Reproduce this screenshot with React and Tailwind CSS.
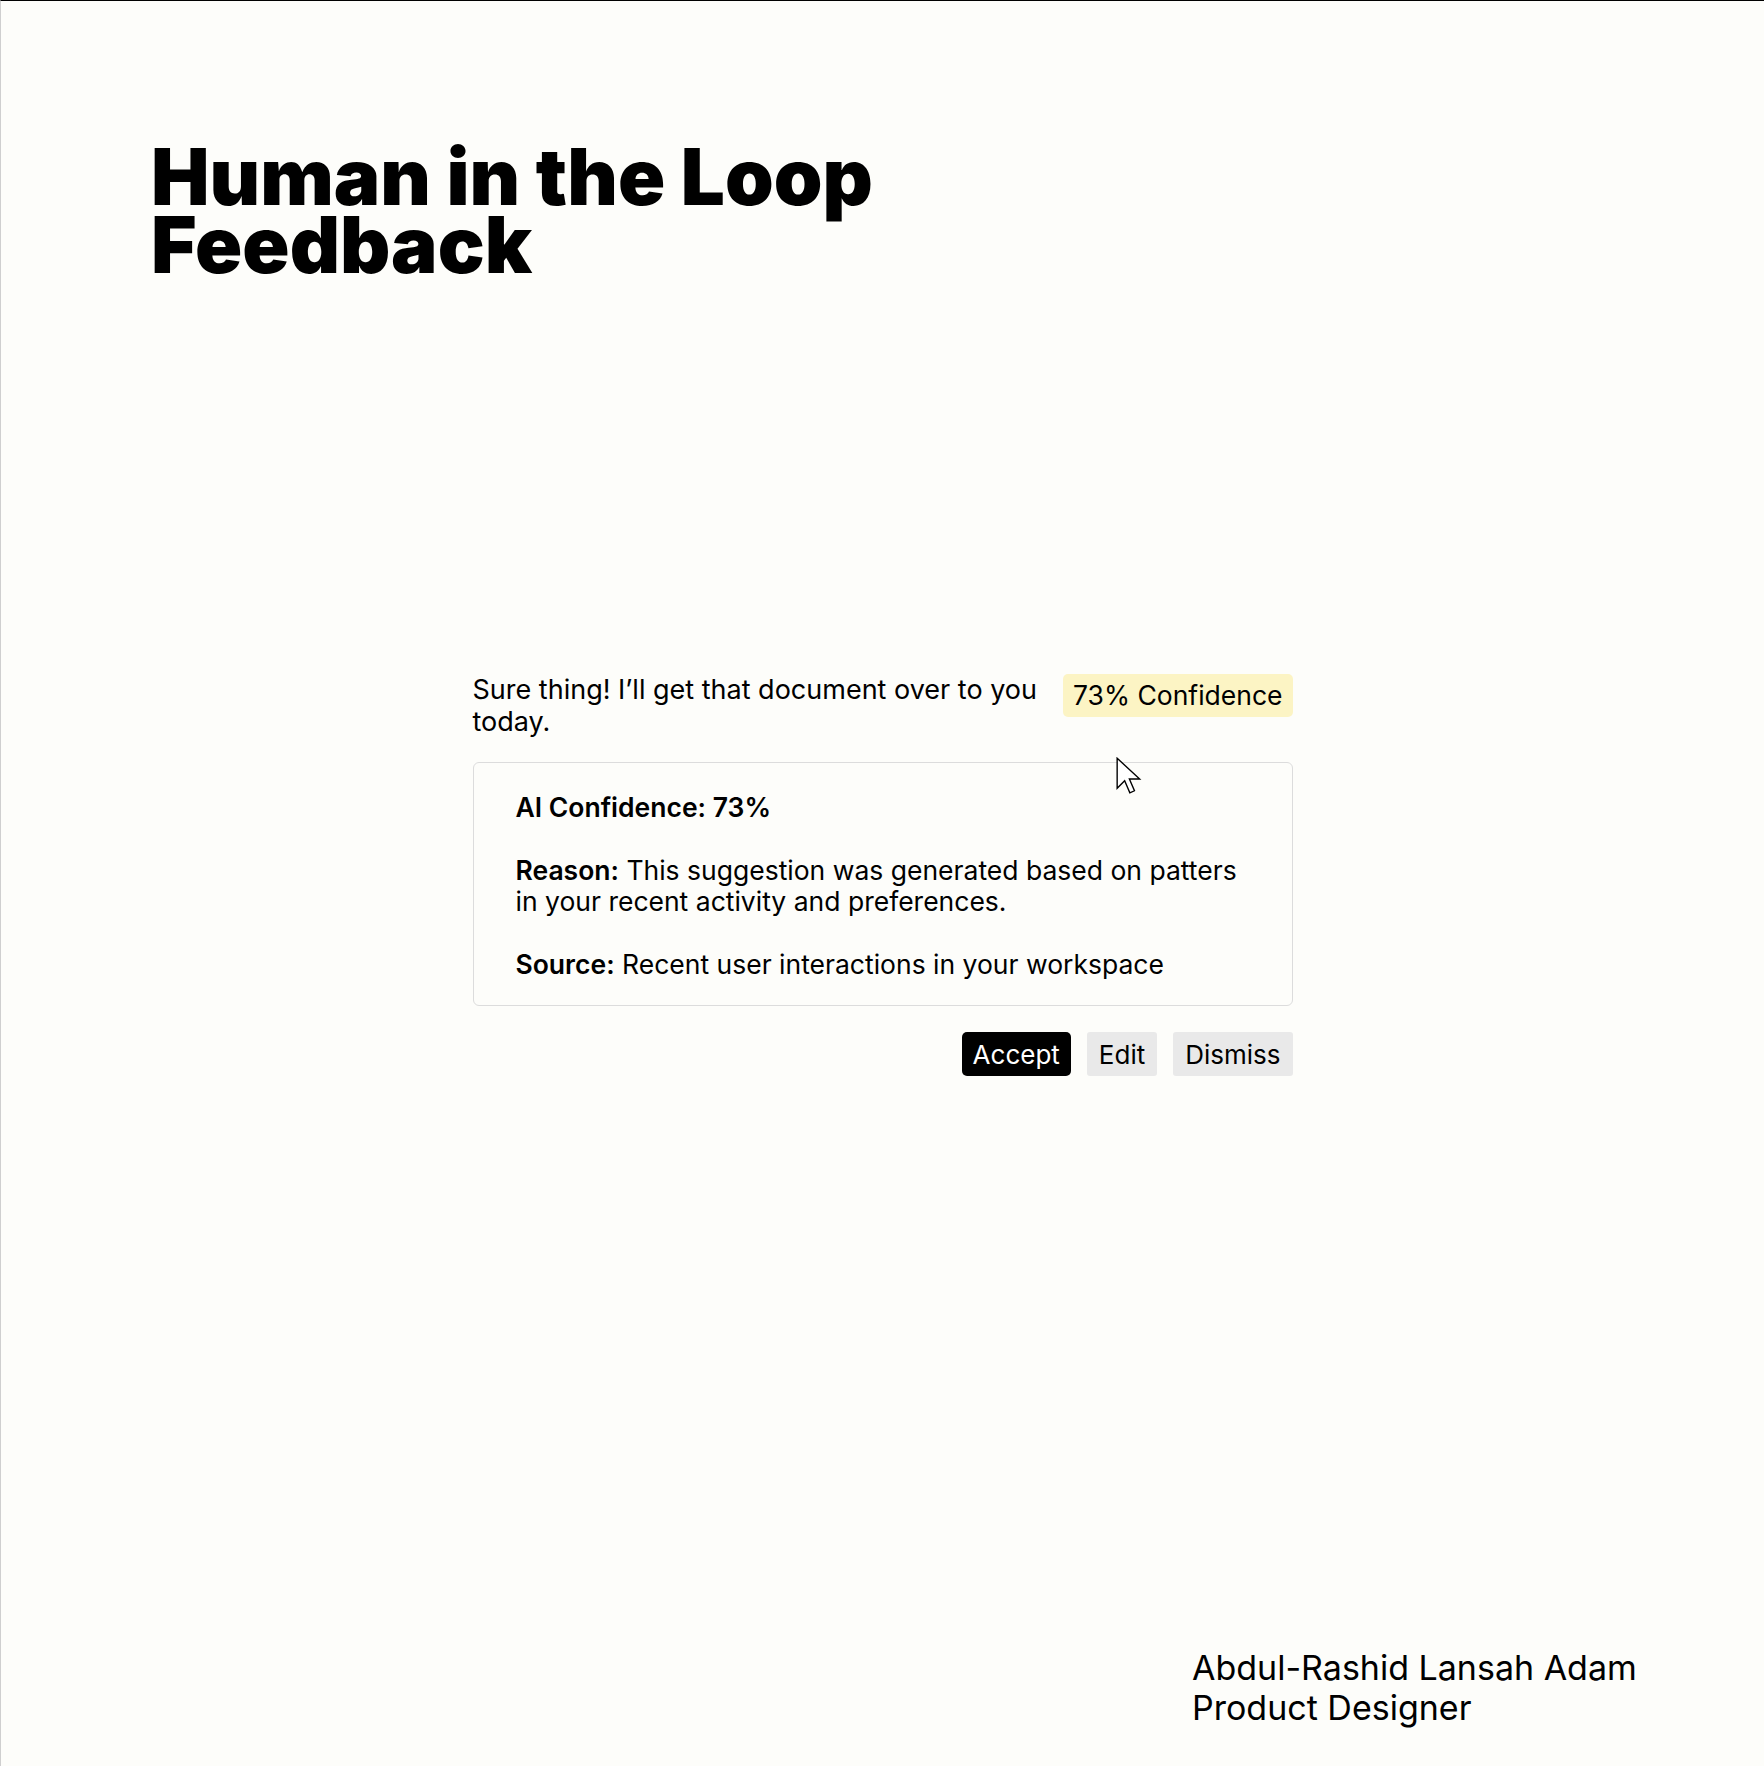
import React from "react";

function Cursor() {
  return (
    <svg width="30" height="44" viewBox="0 0 26 38" className="absolute left-[642px] top-[-6px]" aria-hidden="true">
      <path d="M1 1 L1 27 L7.5 20.5 L12 31 L16 29.2 L11.6 19 L20.5 19 Z" fill="#ffffff" stroke="#000000" strokeWidth="1.2" strokeLinejoin="miter" />
    </svg>
  );
}

export default function App() {
  const font = { fontFamily: "Inter, 'Noto Sans', sans-serif" };
  return (
    <div
      className="min-h-[1766px] w-full bg-[#fdfdfa] border-t border-t-black border-l border-l-[#cfcfcf] flex flex-col text-black"
      style={font}
    >
      <header className="pl-[150px] pt-[142px]">
        <h1 className="text-[78px] leading-[67.5px] font-black tracking-[0em]">
          Human in the Loop
          <br />
          Feedback
        </h1>
      </header>

      <main className="w-[820px] mx-auto mt-[394px]">
        <div className="flex items-start justify-between gap-6">
          <p className="text-[27px] leading-[31.5px] pt-[2px] flex-1">
            Sure thing! I’ll get that document over to you today.
          </p>
          <span className="shrink-0 mt-[2px] bg-[#fcf4c4] rounded-[5px] px-[10px] h-[43px] flex items-center text-[26.5px]">
            73% Confidence
          </span>
        </div>

        <div className="relative mt-[25px] border border-[#dcdcdc] rounded-[6px] px-[42px] pt-[29px] pb-[25px] text-[26.5px] leading-[31.5px] flex flex-col gap-[31px]">
          <Cursor />
          <p className="font-semibold">AI Confidence: 73%</p>
          <p className="whitespace-nowrap">
            <span className="font-semibold">Reason:</span> This suggestion was generated based on patters
            <br />
            in your recent activity and preferences.
          </p>
          <p className="whitespace-nowrap">
            <span className="font-semibold">Source:</span> Recent user interactions in your workspace
          </p>
        </div>

        <div className="mt-[26px] flex justify-end gap-[16px] text-[26px]">
          <button className="h-[44px] px-[11px] rounded-[5px] bg-black text-white">Accept</button>
          <button className="h-[44px] px-[12px] rounded-[3px] bg-[#e9e9e9]">Edit</button>
          <button className="h-[44px] px-[12px] rounded-[3px] bg-[#e9e9e9]">Dismiss</button>
        </div>
      </main>

      <footer className="mt-auto pl-[1191px] pb-[38px] text-[34px] leading-[40px]">
        <p>Abdul-Rashid Lansah Adam</p>
        <p>Product Designer</p>
      </footer>
    </div>
  );
}
